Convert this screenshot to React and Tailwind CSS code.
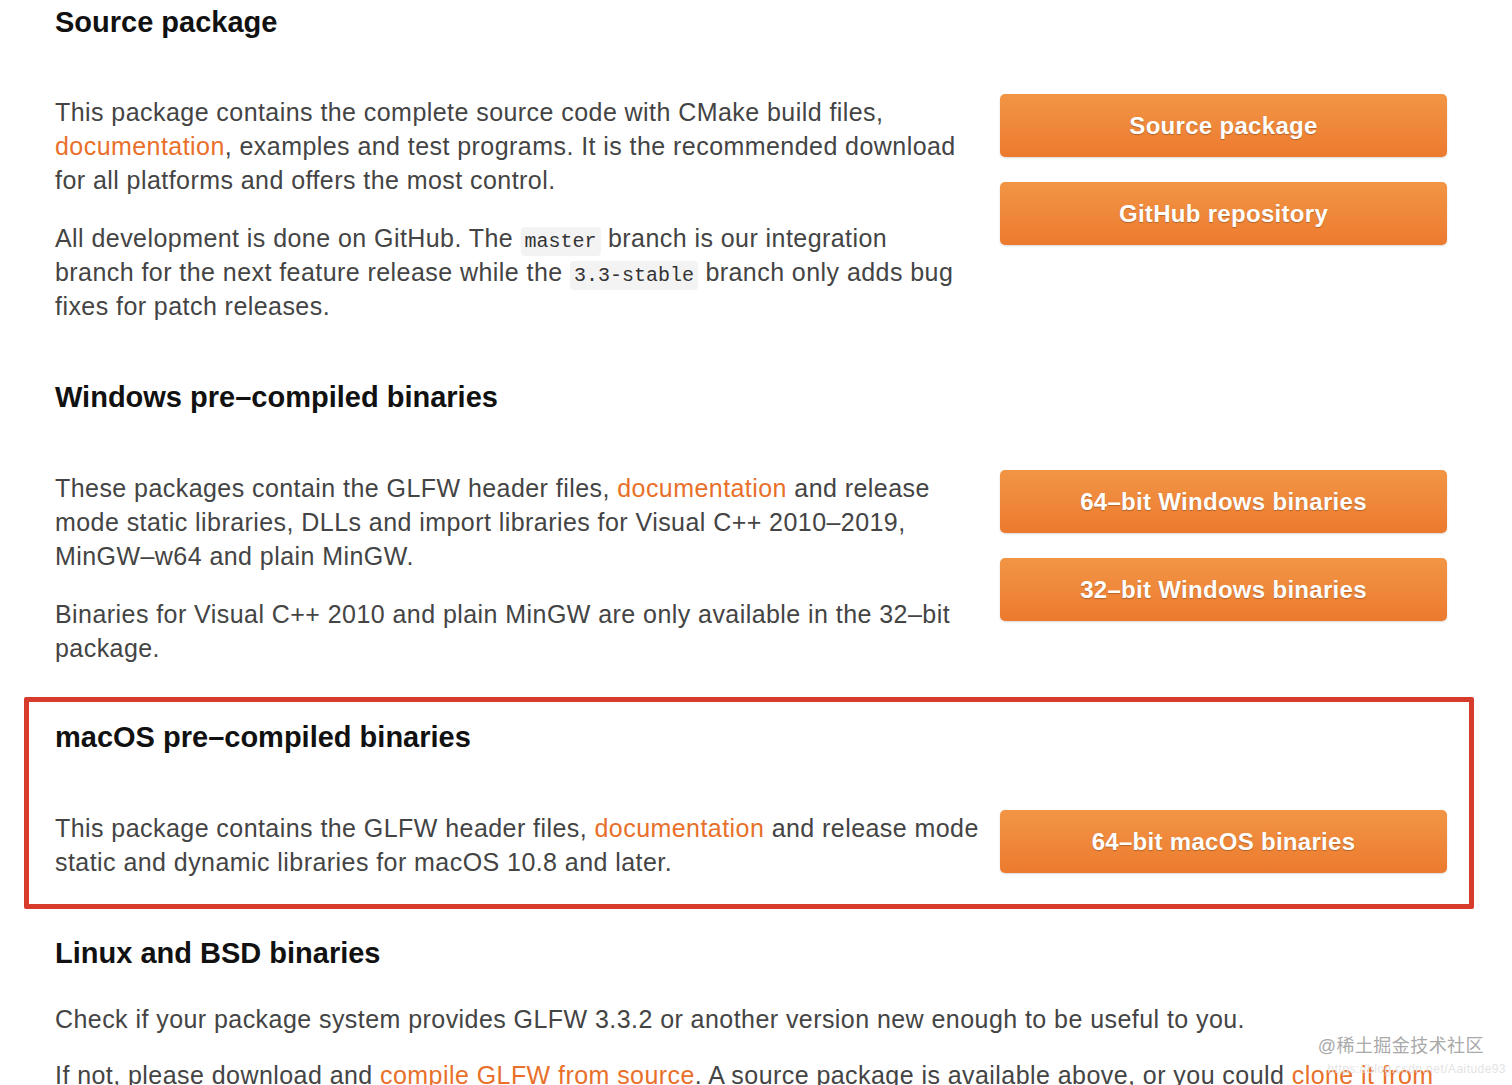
import React from "react";

const font = { fontFamily: '"Liberation Sans", Arial, sans-serif' };

function Button({ children }) {
  return (
    <a className="flex h-[63px] w-[447px] items-center justify-center rounded-[5px] bg-gradient-to-b from-[#f29545] to-[#ec7a2e] text-[24px] font-semibold tracking-[0.3px] text-white shadow-[0_1px_2px_rgba(0,0,0,0.15)] [text-shadow:0_1px_1px_rgba(0,0,0,0.25)]">
      {children}
    </a>
  );
}

function Link({ children }) {
  return <a className="text-[#e8702a]">{children}</a>;
}

function Code({ children }) {
  return (
    <code
      className="rounded-[4px] bg-[#f3f3f3] px-[4px] py-[3px] text-[20px] leading-[20px] tracking-normal text-[#333]"
      style={{ fontFamily: '"Liberation Mono", "Courier New", monospace' }}
    >
      {children}
    </code>
  );
}

function Heading({ children }) {
  return <h2 className="text-[29px] font-semibold leading-[34px] tracking-normal text-[#111]">{children}</h2>;
}

function Row({ text, buttons, wide }) {
  return (
    <div className="flex w-[1392px] items-start justify-between">
      <div className={wide ? "flex w-[935px] flex-col gap-[24px]" : "flex w-[915px] flex-col gap-[24px]"}>{text}</div>
      <div className="-mt-[1px] flex flex-col gap-[25px]">
        {buttons.map((b) => (
          <Button key={b}>{b}</Button>
        ))}
      </div>
    </div>
  );
}

function App() {
  return (
    <div
      className="relative h-[1085px] overflow-hidden bg-white text-[25px] leading-[34px] tracking-[0.44px] text-[#444]"
      style={font}
    >
      <div className="pl-[55px] pt-[5px]">
        <Heading>Source package</Heading>
        <div className="mt-[56px]">
          <Row
            text={[
              <p key="a">
                This package contains the complete source code with CMake build files, <Link>documentation</Link>,
                examples and test programs. It is the recommended download for all platforms and offers the most control.
              </p>,
              <p key="b">
                All development is done on GitHub. The <Code>master</Code> branch is our integration branch for the next
                feature release while the <Code>3.3-stable</Code> branch only adds bug fixes for patch releases.
              </p>,
            ]}
            buttons={["Source package", "GitHub repository"]}
          />
        </div>

        <div className="mt-[57px]">
          <Heading>Windows pre–compiled binaries</Heading>
        </div>
        <div className="mt-[57px]">
          <Row
            text={[
              <p key="a">
                These packages contain the GLFW header files, <Link>documentation</Link> and release mode static
                libraries, DLLs and import libraries for Visual C++ 2010–2019, MinGW–w64 and plain MinGW.
              </p>,
              <p key="b">Binaries for Visual C++ 2010 and plain MinGW are only available in the 32–bit package.</p>,
            ]}
            buttons={["64–bit Windows binaries", "32–bit Windows binaries"]}
          />
        </div>
      </div>

      <div className="ml-[24px] mt-[32px] w-[1450px] rounded-[2px] border-[5px] border-[#d63b2b] pb-[25px] pl-[26px] pt-[18px]">
        <Heading>macOS pre–compiled binaries</Heading>
        <div className="mt-[57px]">
          <Row
            wide
            text={[
              <p key="a">
                This package contains the GLFW header files, <Link>documentation</Link> and release mode static and
                dynamic libraries for macOS 10.8 and later.
              </p>,
            ]}
            buttons={["64–bit macOS binaries"]}
          />
        </div>
      </div>

      <div className="pl-[55px] pt-[27px]">
        <Heading>Linux and BSD binaries</Heading>
        <div className="mt-[32px] flex w-[1392px] flex-col gap-[22px]">
          <p>Check if your package system provides GLFW 3.3.2 or another version new enough to be useful to you.</p>
          <p>
            If not, please download and <Link>compile GLFW from source</Link>. A source package is available above, or
            you could <Link>clone it from</Link> GitHub.
          </p>
        </div>
      </div>

      <div
        className="absolute right-[28px] top-[1034px] text-[18px] leading-[24px] text-[#a9a9a9]"
        style={{ fontFamily: '"Liberation Sans", "Noto Sans CJK SC", sans-serif' }}
      >
        @稀土掘金技术社区
      </div>
      <div className="absolute right-[6px] top-[1062px] text-[12px] leading-[14px] text-[#e4e4e4]">
        https://blog.csdn.net/Aaitude93
      </div>
    </div>
  );
}

export default App;
